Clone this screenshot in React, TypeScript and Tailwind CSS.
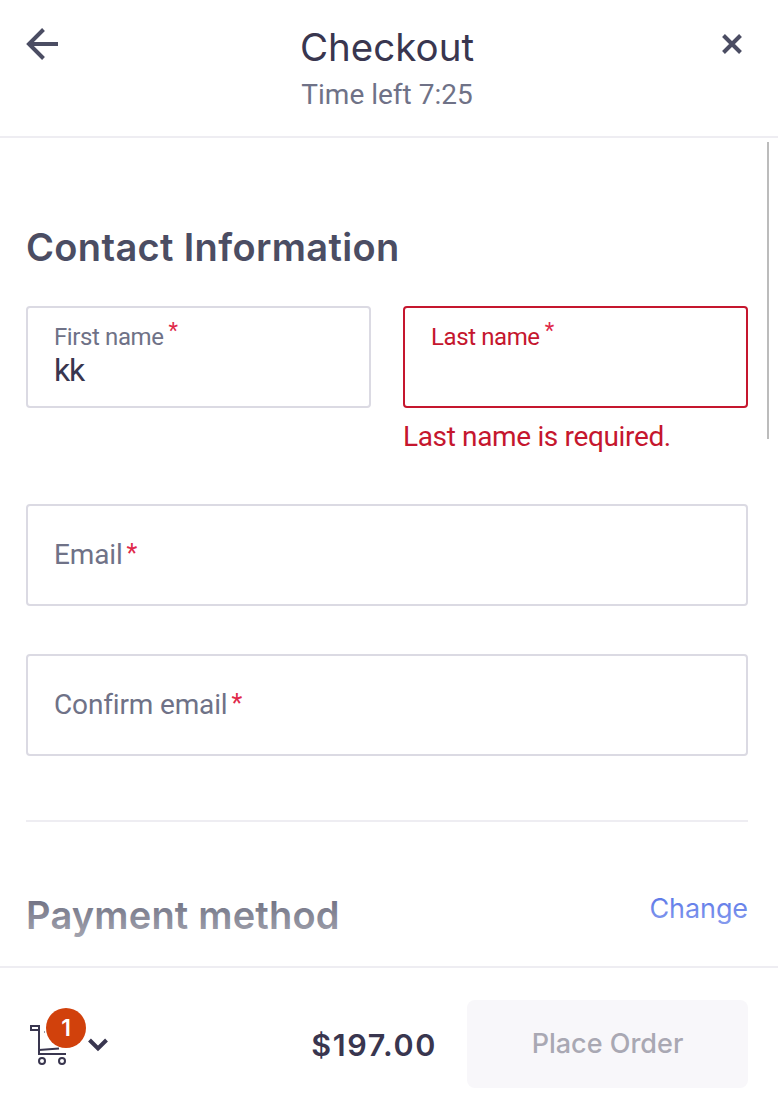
import type { ReactNode } from "react";

function Required({ className }: { className: string }) {
  return <span className={`relative text-[#e0294a] ${className}`}>*</span>;
}

function EmptyField({ label, className }: { label: string; className: string }) {
  return (
    <label className={`flex h-[102px] items-center rounded border-2 border-[#dbdae3] pl-[26px] text-[28px] leading-9 text-[#6f7287] ${className}`}>
      <span className="tracking-[-0.15px]">{label}</span>
      <Required className="-top-px ml-1 text-[25px]" />
    </label>
  );
}

function FilledField({ label, value, tone }: { label: string; value: string; tone: string }) {
  return (
    <label className={`flex h-[102px] flex-col rounded border-2 pt-[15px] pl-[26px] ${tone}`}>
      <span className="flex h-7 items-center text-[24px] leading-7">
        <span className="tracking-[-0.4px]">{label}</span>
        <Required className="-top-1.5 ml-[5px] text-[22px]" />
      </span>
      <span className="h-[38px] text-[32px] leading-[38px] tracking-[-1.3px] text-[#39364f]">{value}</span>
    </label>
  );
}

function SectionTitle({ children, className }: { children: ReactNode; className: string }) {
  return <h2 className={`h-12 font-['Inter',sans-serif] text-[38px] leading-12 font-semibold text-[#4b4d63] ${className}`}>{children}</h2>;
}

export default function App() {
  return (
    <div className="flex h-[1116px] w-[778px] flex-col overflow-hidden bg-white font-['Roboto',sans-serif] text-[#39364f]">
      <header className="flex h-[138px] shrink-0 items-start justify-between border-b-2 border-[#eeedf2] pr-[26px] pl-[26px]">
        <button aria-label="Back" className="mt-7 w-[40px]">
          <svg width="34" height="32" viewBox="0 0 34 32" fill="none" stroke="#4b4d63" strokeWidth="4">
            <path d="M32 16H4" />
            <path d="M17.5 1.5 3 16l14.5 14.5" />
          </svg>
        </button>
        <div className="flex flex-col items-center gap-1 pt-[23px] pr-1">
          <h1 className="h-12 font-['Inter',sans-serif] text-[38.5px] leading-12">Checkout</h1>
          <p className="mt-0.5 h-9 text-[28px] leading-9 text-[#6f7287]">Time left 7:25</p>
        </div>
        <button aria-label="Close" className="mt-8 flex w-[40px] justify-end pr-2">
          <svg width="24" height="24" viewBox="0 0 24 24" fill="none" stroke="#4b4d63" strokeWidth="4">
            <path d="m3.5 3.5 17 17m0-17-17 17" />
          </svg>
        </button>
      </header>

      <main className="relative h-[828px] shrink-0 overflow-hidden px-[26px] pt-[85px]">
        <SectionTitle className="tracking-[0.35px]">Contact Information</SectionTitle>
        <div className="mt-[35px] mr-1 grid grid-cols-2 gap-8">
          <FilledField label="First name" value="kk" tone="border-[#dbdae3] text-[#6f7287]" />
          <div>
            <FilledField label="Last name" value="" tone="border-[#c5162e] text-[#c5162e]" />
            <p className="mt-[11px] h-9 text-[28px] leading-9 tracking-[-0.35px] text-[#c5162e]">Last name is required.</p>
          </div>
        </div>
        <EmptyField label="Email" className="mt-[49px] mr-1" />
        <EmptyField label="Confirm email" className="mt-12 mr-1" />
        <div className="mt-16 mr-1 flex h-40 justify-between border-t-2 border-[#eeedf2]">
          <SectionTitle className="mt-[69px] tracking-[0.2px]">Payment method</SectionTitle>
          <button className="mt-[69px] h-9 font-['Inter',sans-serif] text-[27px] leading-9 tracking-[-0.1px] text-[#3659e3]">Change</button>
        </div>
        <div className="absolute inset-x-0 bottom-0 h-24 bg-linear-to-b from-white/0 to-white/70" />
        <div className="absolute top-1 right-[9px] h-[297px] w-0.5 bg-[#bcbcbc]" />
      </main>

      <footer className="flex h-[150px] shrink-0 items-start border-t-2 border-[#eeedf2] pl-[26px]">
        <button aria-label="Cart, 1 item" className="relative mt-10 h-[60px] w-[86px] text-left">
          <svg width="86" height="60" viewBox="26 1008 86 60" fill="none" stroke="#39364f" strokeWidth="2">
            <path d="M39 1030h-8v-4h8v28h27" />
            <path d="m39 1050 20-1.5" />
            <path d="M44 1032h1" strokeWidth="1" />
            <circle cx="42" cy="1061" r="3" />
            <circle cx="62" cy="1061" r="3" />
            <path d="m89.5 1040 8.5 8.5 8.5-8.5" strokeWidth="4" />
          </svg>
          <span className="absolute top-0 left-5 flex h-10 w-10 items-center justify-center rounded-full bg-[#d1410c] font-['Inter',sans-serif] text-[23px] leading-none font-semibold text-white">1</span>
        </button>
        <div className="mt-[59px] flex-1 pr-[30px] text-right font-['Inter',sans-serif] text-[30.5px] leading-9 font-semibold tracking-[1.6px]">$197.00</div>
        <button className="mt-8 mr-[30px] h-[88px] w-[281px] rounded-lg bg-[#f8f7fa] font-['Inter',sans-serif] text-[27px] leading-9 font-medium text-[#a9a8b3]">
          Place Order
        </button>
      </footer>
    </div>
  );
}
